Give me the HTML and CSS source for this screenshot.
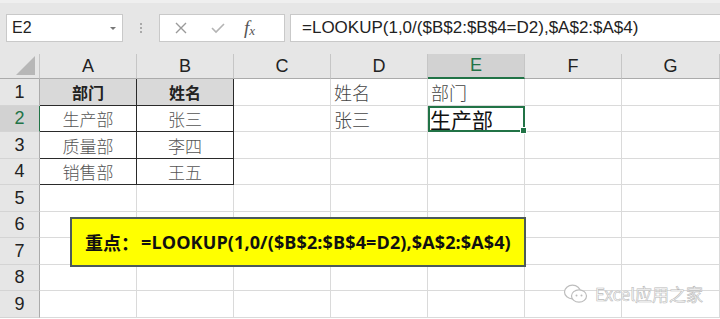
FILE: index.html
```html
<!DOCTYPE html>
<html lang="zh">
<head>
<meta charset="utf-8">
<link rel="stylesheet" href="styles.css">
</head>
<body>
<div class="toolbar">
  <div class="namebox"><span class="ref">E2</span><span class="caret"></span></div>
  <div class="dots"><i></i><i></i><i></i></div>
  <div class="fxbox">
    <svg class="ic" width="14" height="14" viewBox="0 0 14 14"><path d="M2 2 L12 12 M12 2 L2 12" stroke="#9a9a9a" stroke-width="1.4" fill="none"/></svg>
    <svg class="ic" width="16" height="14" viewBox="0 0 16 14"><path d="M2 7 L6 11 L14 3" stroke="#b4b4b4" stroke-width="1.6" fill="none"/></svg>
    <span class="fx">f<sub>x</sub></span>
  </div>
  <div class="formula">=LOOKUP(1,0/($B$2:$B$4=D2),$A$2:$A$4)</div>
</div>
<div class="sheet">
  <div class="corner"><span class="tri"></span></div>
  <div class="ch">A</div><div class="ch">B</div><div class="ch">C</div><div class="ch">D</div><div class="ch sel">E</div><div class="ch">F</div><div class="ch last">G</div>

  <div class="rh">1</div>
  <div class="c t th">部门</div><div class="c t th">姓名</div><div class="c"></div><div class="c lt">姓名</div><div class="c lt">部门</div><div class="c"></div><div class="c"></div>

  <div class="rh sel">2</div>
  <div class="c t">生产部</div><div class="c t">张三</div><div class="c"></div><div class="c lt">张三</div><div class="c active"><span class="big">生产部</span></div><div class="c"></div><div class="c"></div>

  <div class="rh">3</div>
  <div class="c t">质量部</div><div class="c t">李四</div><div class="c"></div><div class="c"></div><div class="c"></div><div class="c"></div><div class="c"></div>

  <div class="rh">4</div>
  <div class="c t">销售部</div><div class="c t">王五</div><div class="c"></div><div class="c"></div><div class="c"></div><div class="c"></div><div class="c"></div>

  <div class="rh">5</div>
  <div class="c"></div><div class="c"></div><div class="c"></div><div class="c"></div><div class="c"></div><div class="c"></div><div class="c"></div>
  <div class="rh">6</div>
  <div class="c"></div><div class="c"></div><div class="c"></div><div class="c"></div><div class="c"></div><div class="c"></div><div class="c"></div>
  <div class="rh">7</div>
  <div class="c"></div><div class="c"></div><div class="c"></div><div class="c"></div><div class="c"></div><div class="c"></div><div class="c"></div>
  <div class="rh">8</div>
  <div class="c"></div><div class="c"></div><div class="c"></div><div class="c"></div><div class="c"></div><div class="c"></div><div class="c"></div>
  <div class="rh">9</div>
  <div class="c"></div><div class="c"></div><div class="c"></div><div class="c"></div><div class="c"></div><div class="c"></div><div class="c"></div>

  <div class="note"><span class="zh">重点：</span>=LOOKUP(1,0/($B$2:$B$4=D2),$A$2:$A$4)</div>
  <div class="mark">
    <svg width="26" height="22" viewBox="0 0 26 22"><ellipse cx="9.5" cy="9" rx="8" ry="6.8" fill="#fff" stroke="#bdbdbd" stroke-width="1.2"/><ellipse cx="16" cy="13" rx="7.5" ry="6.2" fill="#fff" stroke="#bdbdbd" stroke-width="1.2"/><circle cx="13.5" cy="12.5" r="1" fill="#bdbdbd"/><circle cx="18.5" cy="12.5" r="1" fill="#bdbdbd"/></svg>
    <span>Excel应用之家</span>
  </div>
</div>
</body>
</html>
```
FILE: styles.css
```css
html, body { margin: 0; padding: 0; }
body {
  width: 720px; height: 319px; overflow: hidden; background: #fff;
  font-family: "Liberation Sans", "Noto Sans CJK SC", sans-serif;
}
.toolbar {
  height: 54px; box-sizing: border-box; background: #e6e6e6;
  border-top: 3px solid #efefef;
  display: flex; align-items: flex-start; padding: 11px 0 0 6px; gap: 0;
}
.namebox {
  width: 117px; height: 28px; box-sizing: border-box; background: #fff;
  border: 1px solid #c9c9c9; display: flex; align-items: center; justify-content: space-between;
  padding: 0 6px 0 5px;
}
.ref { font-size: 16px; color: #222; }
.caret { width: 0; height: 0; border-left: 3px solid transparent; border-right: 3px solid transparent; border-top: 3px solid #777; }
.dots { width: 36px; height: 28px; display: flex; flex-direction: column; align-items: center; justify-content: center; gap: 2px; }
.dots i { width: 2px; height: 2px; background: #a9a9a9; display: block; }
.fxbox {
  width: 126px; height: 28px; box-sizing: border-box; background: #fff; border: 1px solid #c9c9c9;
  display: flex; align-items: center; padding: 0 0 0 14px; gap: 0;
}
.fxbox .ic:first-child { margin-right: 22px; }
.fxbox .ic:nth-child(2) { margin-right: 18px; }
.fx { font-family: "Liberation Serif", serif; font-style: italic; font-size: 19px; color: #555; }
.fx sub { font-size: 13px; vertical-align: -1px; }
.formula {
  margin-left: 5px; flex: 1; height: 28px; box-sizing: border-box; background: #fff;
  border: 1px solid #c9c9c9; border-right: none; padding-left: 11px;
  font-size: 17px; line-height: 26px; color: #222; white-space: nowrap;
}
.sheet {
  position: relative;
  display: grid;
  grid-template-columns: 40px repeat(6, 97px) 1fr;
  grid-template-rows: 25px 27px 26px 27px 26px 27px 26px 27px 26px 27px;
}
.corner { background: #e6e6e6; border-right: 1px solid #c6c6c6; border-bottom: 1px solid #ababab; position: relative; }
.tri {
  position: absolute; right: 4px; bottom: 3px; width: 0; height: 0;
  border-left: 19px solid transparent; border-bottom: 19px solid #b7b7b7;
}
.ch {
  background: #e6e6e6; border-right: 1px solid #c6c6c6; border-bottom: 1px solid #ababab;
  display: flex; align-items: center; justify-content: center;
  font-size: 18px; color: #222; box-sizing: border-box;
}
.ch.sel { background: #d2d2d2; color: #217346; border-bottom: 2px solid #217346; }
.rh {
  background: #e6e6e6; border-right: 1px solid #ababab; border-bottom: 1px solid #d4d4d4;
  display: flex; align-items: center; justify-content: center;
  font-size: 18px; color: #222; box-sizing: border-box;
}
.rh.sel { background: #d2d2d2; color: #217346; border-right: 1px solid #217346; }
.c {
  border-right: 1px solid #dadada; border-bottom: 1px solid #dadada; box-sizing: border-box;
  display: flex; align-items: center; justify-content: center;
  font-family: "Noto Sans CJK SC", sans-serif; font-size: 17px; color: #555; font-weight: 300;
}
.c.t { border-right-color: #2a2a2a; border-bottom-color: #2a2a2a; }
.c.th { background: #d9d9d9; font-weight: 700; color: #222; font-size: 16px; }
.c.lt { justify-content: flex-start; padding-left: 3px; font-size: 18px; color: #444; }
.c.active {
  justify-content: flex-start; padding-left: 2px; position: relative;
  outline: 2px solid #217346; outline-offset: -2px; z-index: 1;
}
.c.active::after {
  content: ""; position: absolute; right: -3px; bottom: -3px; width: 5px; height: 5px;
  background: #217346; border: 1px solid #fff;
}
.big { font-size: 21px; color: #111; font-weight: 400; }
.note {
  position: absolute; left: 70px; top: 163px; width: 456px; height: 50px; box-sizing: border-box;
  background: #ffff00; border: 2px solid #4c5a5a;
  display: flex; align-items: center; padding-left: 13px;
  font-family: "Open Sans", "Noto Sans CJK SC", sans-serif; font-weight: 700; font-size: 18px; color: #111;
  white-space: nowrap; z-index: 2; letter-spacing: 0.12px;
}
.note .zh { font-family: "Noto Sans CJK SC", sans-serif; margin-right: 2px; letter-spacing: 0; }
.mark {
  position: absolute; left: 563px; top: 227px; display: flex; align-items: center; gap: 6px;
  font-family: "Noto Sans CJK SC", sans-serif; font-size: 17px; color: #fff;
  -webkit-text-stroke: 0.6px #b9b9b9; z-index: 2;
}
```
